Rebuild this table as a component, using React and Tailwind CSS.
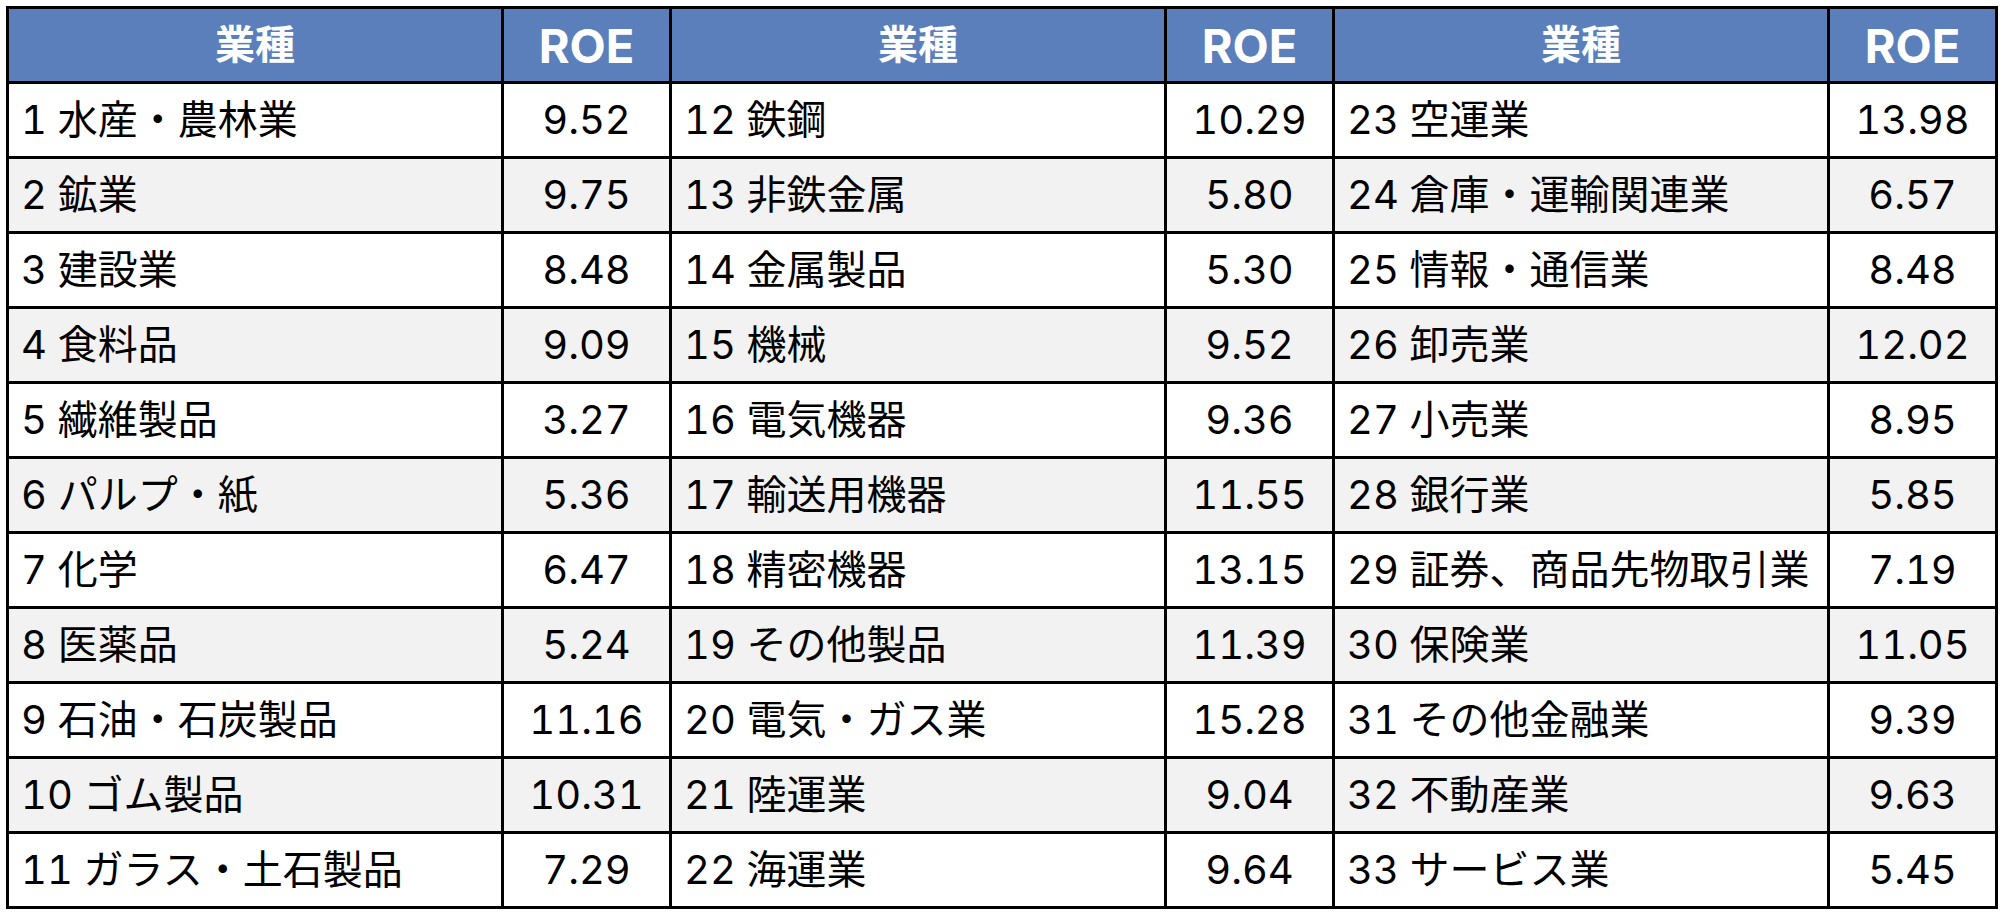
const rows = [
  ['1 水産・農林業', '9.52', '12 鉄鋼', '10.29', '23 空運業', '13.98'],
  ['2 鉱業', '9.75', '13 非鉄金属', '5.80', '24 倉庫・運輸関連業', '6.57'],
  ['3 建設業', '8.48', '14 金属製品', '5.30', '25 情報・通信業', '8.48'],
  ['4 食料品', '9.09', '15 機械', '9.52', '26 卸売業', '12.02'],
  ['5 繊維製品', '3.27', '16 電気機器', '9.36', '27 小売業', '8.95'],
  ['6 パルプ・紙', '5.36', '17 輸送用機器', '11.55', '28 銀行業', '5.85'],
  ['7 化学', '6.47', '18 精密機器', '13.15', '29 証券、商品先物取引業', '7.19'],
  ['8 医薬品', '5.24', '19 その他製品', '11.39', '30 保険業', '11.05'],
  ['9 石油・石炭製品', '11.16', '20 電気・ガス業', '15.28', '31 その他金融業', '9.39'],
  ['10 ゴム製品', '10.31', '21 陸運業', '9.04', '32 不動産業', '9.63'],
  ['11 ガラス・土石製品', '7.29', '22 海運業', '9.64', '33 サービス業', '5.45'],
];

const font = { fontFamily: 'Inter, "Noto Sans CJK JP", sans-serif' };

export default function App() {
  return (
    <div className="w-[2004px] h-[920px] bg-white pt-[6px] pl-[6px] tabular-nums" style={font}>
      <div className="grid w-[1992px] grid-cols-[492px_165px_492px_165px_492px_165px] auto-rows-[72px] gap-[3px] bg-black p-[3px]">
        {[0, 1, 2].map((i) => (
          <div key={'h' + i} className="contents">
            <div className="flex items-center justify-center bg-[#5b7fbb] text-[40px] font-bold text-white">業種</div>
            <div className="flex items-center justify-center bg-[#5b7fbb] text-[47px] font-bold leading-none text-white">ROE</div>
          </div>
        ))}
        {rows.map((r, ri) => (
          <div key={ri} className="contents">
            {r.map((cell, ci) => (
              <div
                key={ci}
                className={`flex items-center text-[40px] text-black ${ri % 2 ? 'bg-[#f2f2f2]' : 'bg-white'} ${ci % 2 ? 'justify-center' : 'pl-[12px]'}`}
              >
                {cell}
              </div>
            ))}
          </div>
        ))}
      </div>
    </div>
  );
}
